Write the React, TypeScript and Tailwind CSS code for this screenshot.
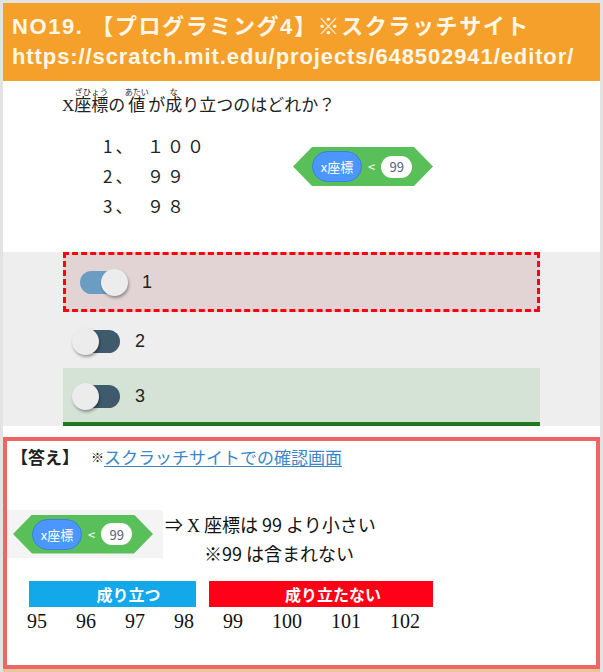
import React from 'react'

const jp = "[font-family:'Noto_Sans_CJK_JP',sans-serif]"
const sans = "[font-family:'Liberation_Sans','Noto_Sans_CJK_JP',sans-serif]"
const serif = "[font-family:'Liberation_Serif','Noto_Sans_CJK_JP',serif]"

function ScratchBlock() {
  return (
    <div className={`w-[140px] h-[39px] bg-[#59c059] [clip-path:polygon(0_50%,19px_0,calc(100%_-_19px)_0,100%_50%,calc(100%_-_19px)_100%,19px_100%)] flex items-center pl-[19px] ${jp}`}>
      <div className="w-[50px] h-[31px] rounded-full bg-[#4c97ff] border border-[#3d7fd9] flex items-center justify-center text-white text-[13px] leading-none">x座標</div>
      <span className="ml-[6px] text-white text-[13px] leading-none">&lt;</span>
      <div className="ml-[6px] w-[31px] h-[22px] rounded-full bg-white flex items-center justify-center text-[13px] text-[#575e75] leading-none">99</div>
    </div>
  )
}

function Toggle({ on }: { on: boolean }) {
  return (
    <div className={`relative w-[47px] h-[23px] rounded-full ${on ? 'bg-[#6b9dc4]' : 'bg-[#3e5a6c]'}`}>
      <div className={`absolute top-[-2px] w-[27px] h-[27px] rounded-full bg-[#ececec] shadow-[1px_2px_3px_rgba(0,0,0,0.35)] ${on ? 'right-[-1px]' : 'left-[-1px]'}`} />
    </div>
  )
}

export default function App() {
  const numbers = ['95', '96', '97', '98', '99', '100', '101', '102']

  return (
    <div className="w-[603px] h-[672px] bg-white border-x-[3px] border-t-[3px] border-[#e3e3e3] flex flex-col overflow-hidden">
      {/* Header */}
      <div className={`h-[78px] bg-[#f5a02a] text-[#fff8ea] font-bold text-[22px] leading-[30px] px-[9px] pt-[9px] ${sans}`}>
        <div className="tracking-[1.6px]">NO19. 【プログラミング4】※スクラッチサイト</div>
        <div className="tracking-[0.9px]">https://scratch.mit.edu/projects/648502941/editor/</div>
      </div>

      {/* Question */}
      <div className="h-[171px] pt-[6px]">
        <div className={`pl-[59px] text-[17px] text-[#222] leading-[26px] ${jp}`}>
          <span className={serif}>X</span>
          <ruby>座標<rt className="text-[8px]">ざひょう</rt></ruby>の
          <ruby className="mx-[3px]">値<rt className="text-[8px]">あたい</rt></ruby>が
          <ruby>成<rt className="text-[8px]">な</rt></ruby>り立つのはどれか？
        </div>
        <div className="flex mt-[12px]">
          <div className={`pl-[100px] w-[290px] text-[17px] text-[#222] leading-[30px] tracking-[3px] ${jp}`}>
            <div>1、　１００</div>
            <div>2、　９９</div>
            <div>3、　９８</div>
          </div>
          <div className="mt-[16px]">
            <ScratchBlock />
          </div>
        </div>
      </div>

      {/* Options */}
      <div className="h-[174px] bg-[#eeeeee] px-[60px]">
        <div className={`w-[477px] text-[18px] text-[#222] ${sans}`}>
          <div className="h-[60px] border-[3px] border-dashed border-[#ff0010] bg-[#e2d4d4] flex items-center pl-[14px] gap-[15px]">
            <Toggle on={true} />
            <span>1</span>
          </div>
          <div className="h-[56px] flex items-center pl-[10px] gap-[15px] pt-[2px]">
            <Toggle on={false} />
            <span>2</span>
          </div>
          <div className="h-[58px] bg-[#d4e3d5] border-b-4 border-[#1d7a1f] flex items-center pl-[10px] gap-[15px] pt-[2px]">
            <Toggle on={false} />
            <span>3</span>
          </div>
        </div>
      </div>

      <div className="h-[11px]" />

      {/* Answer */}
      <div className="h-[232px] border-4 border-[#ef6464] bg-white">
        <div className={`flex items-center h-[24px] mt-[4px] pl-[4px] ${jp}`}>
          <span className="font-bold text-[17px] text-[#222]">【答え】</span>
          <span className="ml-[12px] text-[13px] text-[#222]">※</span>
          <span className="text-[17px] text-[#3a86c6] underline underline-offset-2">スクラッチサイトでの確認画面</span>
        </div>

        <div className="flex mt-[41px]">
          <div className="w-[156px] h-[48px] bg-[#f4f4f4] flex items-center pl-[6px]">
            <ScratchBlock />
          </div>
          <div className={`ml-[2px] mt-[1px] text-[18px] leading-[27px] text-[#111] ${jp}`}>
            <div>⇒ <span className={serif}>X</span> 座標は 99 より小さい</div>
            <div className="pl-[39px]">※99 は含まれない</div>
          </div>
        </div>

        <div className={`flex pl-[22px] mt-[14px] text-white font-bold text-[16px] ${jp}`}>
          <div className="w-[167px] h-[26px] bg-[#12a8e9] flex items-center justify-center pl-[32px]">成り立つ</div>
          <div className="ml-[13px] w-[224px] h-[26px] bg-[#ff0016] flex items-center justify-center pl-[24px]">成り立たない</div>
        </div>

        <div className={`flex pl-[20px] gap-[29px] mt-[2px] text-[20px] leading-[24px] text-[#111] ${serif}`}>
          {numbers.map((n) => (
            <span key={n}>{n}</span>
          ))}
        </div>
      </div>

      <div className="h-[3px] bg-[#e6c79a]" />
    </div>
  )
}
